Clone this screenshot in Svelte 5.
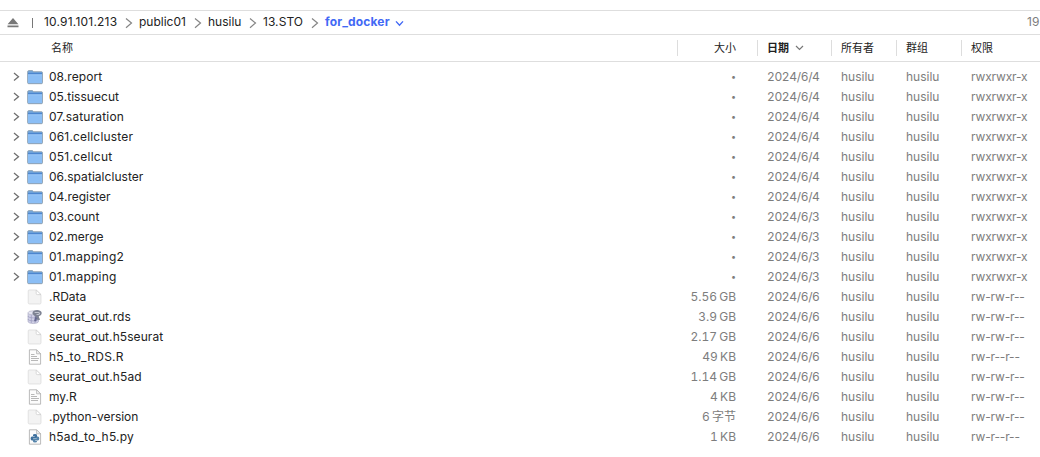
<script>
  const crumbs = [
    { name: '10.91.101.213', width: 81, spacing: 0.2 },
    { name: 'public01', width: 55, spacing: 0 },
    { name: 'husilu', width: 41, spacing: 0 },
    { name: '13.STO', width: 48, spacing: 0.05 }
  ];
  const files = [
    ['folder', '08.report', 0.05, '•', '2024/6/4'],
    ['folder', '05.tissuecut', 0.05, '•', '2024/6/4'],
    ['folder', '07.saturation', 0.2, '•', '2024/6/4'],
    ['folder', '061.cellcluster', 0.17, '•', '2024/6/4'],
    ['folder', '051.cellcut', 0.24, '•', '2024/6/4'],
    ['folder', '06.spatialcluster', 0.05, '•', '2024/6/4'],
    ['folder', '04.register', 0, '•', '2024/6/4'],
    ['folder', '03.count', 0, '•', '2024/6/3'],
    ['folder', '02.merge', 0, '•', '2024/6/3'],
    ['folder', '01.mapping2', 0.23, '•', '2024/6/3'],
    ['folder', '01.mapping', 0.25, '•', '2024/6/3'],
    ['blank', '.RData', 0, '5.56 GB', '2024/6/6', 'rw-rw-r--'],
    ['database', 'seurat_out.rds', 0.08, '3.9 GB', '2024/6/6', 'rw-rw-r--'],
    ['blank', 'seurat_out.h5seurat', 0.08, '2.17 GB', '2024/6/6', 'rw-rw-r--'],
    ['text', 'h5_to_RDS.R', 0.25, '49 KB', '2024/6/6', 'rw-r--r--'],
    ['blank', 'seurat_out.h5ad', 0.1, '1.14 GB', '2024/6/6', 'rw-rw-r--'],
    ['text', 'my.R', 0, '4 KB', '2024/6/6', 'rw-rw-r--'],
    ['blank', '.python-version', -0.04, '6 字节', '2024/6/6', 'rw-rw-r--'],
    ['python', 'h5ad_to_h5.py', 0.22, '1 KB', '2024/6/6', 'rw-r--r--']
  ].map(([icon, name, spacing, size, date, mode = 'rwxrwxr-x']) => ({ icon, name, spacing, size, date, mode }));
</script>

<main>
  <nav>
    <svg class="eject" width="12" height="10" viewBox="0 0 12 10"><path d="M6 0 11.4 6.2H.6Z M.5 7.4h11v1.8H.5Z" fill="#777" /></svg>
    <span class="bar"></span>
    {#each crumbs as crumb}
      <span class="crumb" style:width="{crumb.width}px" style:letter-spacing="{crumb.spacing}px">{crumb.name}</span>
      <svg class="sep" width="8" height="12" viewBox="0 0 8 12"><path d="m1 1.5 5.5 4.5L1 10.7" fill="none" stroke="#858585" stroke-width="1.2" /></svg>
    {/each}
    <b>for_docker</b>
    <svg class="open" width="9" height="7" viewBox="0 0 9 7"><path d="m1 1.4 3.5 3.8L8 1.4" fill="none" stroke="#4269f5" stroke-width="1.4" /></svg>
    <span class="count">19</span>
  </nav>

  <header>
    <span class="name">名称</span>
    <span class="size">大小</span>
    <span class="date">日期 <svg width="9" height="6" viewBox="0 0 9 6"><path d="m1 1 3.5 3.4L8 1" fill="none" stroke="#777" stroke-width="1.2" /></svg></span>
    <span class="owner">所有者</span>
    <span class="owner">群组</span>
    <span class="mode">权限</span>
  </header>

  <section>
    {#each files as file}
      <div class="row">
        <div class="name">
          {#if file.icon === 'folder'}
            <svg class="expand" width="7" height="10" viewBox="0 0 7 10"><path d="m1 1.1 4.5 3.7L1 8.5" fill="none" stroke="#707070" stroke-width="1.3" /></svg>
          {/if}
          <svg class="icon" width="16" height="16" viewBox="0 0 16 16">
            {#if file.icon === 'folder'}
              <path d="M.6 3.1q0-1.5 1.2-1.5h3.7l1 1.1h8q1 0 1 1.1v9.6q0 1.3-1.1 1.3H1.7Q.6 14.7.6 13.4Z" fill="#75a8dc" stroke="#8c9caa" stroke-width=".8" />
              <path d="M1 3.8h14v1.8H1Z" fill="#4c86cf" />
              <path d="M1 5.4h14v8.3q0 .3-.5.3H1.5q-.5 0-.5-.3Z" fill="#8bbef5" />
              <path d="M1 5.8h14" stroke="#a9d0fb" stroke-width=".6" />
            {:else if file.icon === 'database'}
              <path d="M1 3.8v8.5c0 3 10.5 3 10.5 0V3.8" fill="#d0d0e6" stroke="#a3a3bd" stroke-width=".6" />
              <ellipse cx="6.2" cy="3.8" rx="5.2" ry="2" fill="#e6e6f2" stroke="#adadc2" stroke-width=".6" />
              <path d="M1 7c0 2.5 10.5 2.5 10.5 0M1 10c0 2.5 10.5 2.5 10.5 0M4.3 6v8M8 6v8" fill="none" stroke="#9292b6" stroke-width=".6" />
              <path d="M5.7 5.2C4.2 1.6 10 .2 13 1.7c3.4 1.7 1.1 5.5-1.5 5.5l1.6 3.5-2.6.3-2-3.4Z" fill="#7d8292" />
              <path d="M7.6 3.5h4q2 1.1 0 2H9.5" fill="none" stroke="#c1c4cf" stroke-width="1.2" />
              <path d="m8.5 7 1.6 2.5-1 3-2-.6" fill="#64678f" />
            {:else if file.icon === 'blank'}
              <path d="M2 1h7.2L14 5.6v8.1q0 1.3-1.2 1.3H2.6Q1.2 15 1.2 13.7V2Q1.2 1 2 1Z" fill="#f3f3f3" stroke="#d8d8d8" stroke-width=".7" />
              <path d="M9.2 1v3.5q0 1.1 1 1.1H14Z" fill="#fff" stroke="#cbcbcb" stroke-width=".7" />
            {:else}
              <path d="M2.4.8h7.2l4 4v10.4H2.4Z" fill="#fcfcfc" stroke="#a9a9a9" stroke-width=".8" />
              <path d="M9.6.8v4h4Z" fill="#f2f2f2" stroke="#aaa" stroke-width=".7" />
              {#if file.icon === 'text'}
                <path d="M4 5.5h3.5M4 7.5h6M4 9.5h8M4 11.5h7" stroke="#b0b0b0" stroke-width=".9" />
              {:else}
                <path d="M6 6q0-1 2-1t2 1v2.2q0 1-1 1H7q-1 0-1 1v1.3H5q-1.4 0-1.4-2t1.4-2h2.7V7H6Z" fill="#3f719e" />
                <path d="M10 7.4h.8q1.5 0 1.5 2t-1.5 2H8.2v.6H10v.6q0 1-2 1t-2-1v-2q0-1 1-1h2q1 0 1-1Z" fill="#5584aa" />
              {/if}
            {/if}
          </svg>
          <span class="filename" style:letter-spacing="{file.spacing}px">{file.name}</span>
        </div>
        <span class="size" class:bullet={file.size === '•'}>{file.size}</span>
        <span class="date">{file.date}</span>
        <span class="owner">husilu</span>
        <span class="owner">husilu</span>
        <span class="mode">{file.mode}</span>
      </div>
    {/each}
  </section>
</main>

<style>
  :global(body) { background: #fff; }
  main {
    box-sizing: border-box;
    width: 1040px;
    height: 457px;
    padding-top: 10px;
    overflow: hidden;
    color: #222;
    font: 12px/20px Inter, "Noto Sans CJK SC", sans-serif;
  }
  nav {
    box-sizing: border-box;
    display: flex;
    align-items: center;
    height: 25px;
    border-top: 1px solid #dedede;
    border-bottom: 1px solid #dedede;
    white-space: nowrap;
  }
  nav > span, nav > b { margin-top: -1px; }
  svg { display: block; flex: none; }
  .eject { margin: 1px 0 0 7px; }
  nav .bar { width: 1px; height: 10px; margin: 0 11px 0 13px; background: #777; }
  .crumb { flex: none; }
  .sep { margin: 0 6px 0 0; }
  nav b { width: 70px; color: #4269f5; font-weight: 700; letter-spacing: .15px; }
  .open { margin-top: 1px; }
  .count { width: 13px; margin-left: auto; color: #7d7d7d; }
  header, .row {
    display: grid;
    grid-template-columns: 677px 90px 64px 65px 65px 79px;
  }
  header {
    height: 26px;
    border-bottom: 1px solid #dedede;
    font: 11px/26px Inter, "Noto Sans CJK SC", sans-serif;
    align-items: center;
  }
  header > span { box-sizing: border-box; height: 16px; line-height: 17px; }
  header .name { padding-left: 51px; }
  header > span:not(.name) { border-left: 1px solid #ddd; }
  header .size { width: 86px; padding-right: 27px; }
  header .date {
    display: flex;
    align-items: center;
    gap: 6px;
    margin-left: -10px;
    padding-left: 9px;
    font-weight: 700;
  }
  header .owner, header .mode { padding-left: 9px; }
  section { padding-top: 5px; }
  .row { height: 20px; color: #7d7d7d; }
  .row .name { display: flex; align-items: center; color: #222; }
  .expand { margin-left: 13px; }
  .icon { margin-left: 27px; }
  .expand + .icon { margin-left: 7px; }
  .filename { margin-left: 6px; }
  .size { text-align: right; }
  .row .size { padding-right: 31px; word-spacing: -1px; font-variant-numeric: tabular-nums; }
  .row .bullet { padding-right: 31px; font-size: 9px; }
  .row .date { letter-spacing: -.35px; font-variant-numeric: tabular-nums; }
  .row .owner, .row .mode { padding-left: 10px; }
  .row .mode { letter-spacing: -.15px; }
</style>
